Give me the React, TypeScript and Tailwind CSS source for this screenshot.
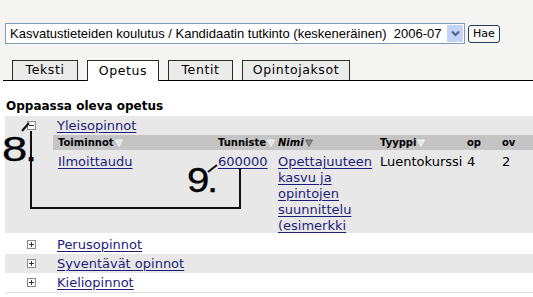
import React from "react";

const Tri = ({ dark = false }: { dark?: boolean }) => (
  <svg width="8" height="8" viewBox="0 0 8 8" className="inline-block ml-[1px] align-[-1px]">
    <polygon
      points="0.5,1 7.5,1 4,7.5"
      fill={dark ? "#8a8a8a" : "#e4e4e4"}
      stroke={dark ? "#6b6b6b" : "#f4f4f4"}
      strokeWidth="1"
    />
  </svg>
);

const Toggle = ({ open = false }: { open?: boolean }) => (
  <div className="w-[9px] h-[9px] border border-[#8c8c8c] bg-white flex items-center justify-center relative">
    <div className="w-[5px] h-[1px] bg-[#333]" />
    {!open && <div className="absolute w-[1px] h-[5px] bg-[#333]" />}
  </div>
);

const tabs = [
  { label: "Teksti", w: "w-[66px]", active: false },
  { label: "Opetus", w: "w-[72px]", active: true },
  { label: "Tentit", w: "w-[65px]", active: false },
  { label: "Opintojaksot", w: "w-[108px]", active: false },
];

const link = "text-[#1c1c7a] underline underline-offset-[2px]";

export default function App() {
  return (
    <div className="w-[533px] h-[297px] bg-white relative overflow-hidden font-['DejaVu_Sans',sans-serif] text-black">
      {/* top search bar + tabs */}
      <div className="bg-[#f4f4f2] pt-[23px]">
        <div className="flex items-center pl-[5px]">
          <div className="w-[460px] h-[21px] border border-[#7f9db9] bg-white flex items-center">
            <span className="flex-1 pl-[4px] font-['Liberation_Sans',sans-serif] text-[13px] whitespace-pre leading-none">
              Kasvatustieteiden koulutus / Kandidaatin tutkinto (keskeneräinen)  2006-07
            </span>
            <div className="w-[16px] h-[17px] mr-[1px] bg-[#c3d3f7] flex items-center justify-center">
              <svg width="9" height="7" viewBox="0 0 9 7">
                <path d="M1 1.5 L4.5 5 L8 1.5" fill="none" stroke="#4d6185" strokeWidth="2" />
              </svg>
            </div>
          </div>
          <div className="ml-[3px] h-[18px] px-[4px] border border-[#2a3a5a] rounded-[3px] bg-[#f7f7f4] flex items-center text-[11px] leading-none">
            Hae
          </div>
        </div>
        <div className="mt-[17px] ml-[3px] h-[20px] border-b border-black flex items-end gap-[9px] pl-[9px]">
          {tabs.map((t) => (
            <div
              key={t.label}
              className={`${t.w} h-[20px] border border-b-0 border-[#2b2b2b] flex items-center justify-center text-[12.5px] tracking-[0.6px] ${
                t.active ? "bg-white h-[21px] -mb-px" : "bg-[#ebebeb]"
              }`}
            >
              {t.label}
            </div>
          ))}
        </div>
      </div>

      {/* heading */}
      <div className="pl-[6px] pt-[17px] h-[35px] text-[12px] font-bold leading-[16px]">Oppaassa oleva opetus</div>

      {/* expanded block */}
      <div className="ml-[5px] bg-[#e8e8e8] h-[117px]">
        <div className="h-[19px] flex items-center">
          <div className="w-[22px]" />
          <Toggle open />
          <a className={`ml-[21px] text-[13px] leading-none ${link}`}>Yleisopinnot</a>
        </div>
        <div className="ml-[48px] h-[15px] bg-[#c4c4c4] grid grid-cols-[5px_160px_60px_102px_87px_35px_1fr] items-center text-[10px] font-bold leading-none">
          <span />
          <span>
            Toiminnot
            <Tri />
          </span>
          <span>
            Tunniste
            <Tri />
          </span>
          <span className="italic">
            Nimi
            <Tri dark />
          </span>
          <span>
            Tyyppi
            <Tri />
          </span>
          <span>op</span>
          <span>ov</span>
        </div>
        <div className="ml-[48px] grid grid-cols-[5px_160px_60px_102px_87px_35px_1fr] pt-[4px] text-[13px] leading-[16px] h-[83px] overflow-hidden">
          <span />
          <a className={link}>Ilmoittaudu</a>
          <a className={link}>600000</a>
          <a className={`${link} pr-[2px]`}>
            Opettajuuteen kasvu ja opintojen suunnittelu (esimerkki
          </a>
          <span>Luentokurssi</span>
          <span>4</span>
          <span>2</span>
        </div>
      </div>

      {/* collapsed blocks */}
      <div className="mt-[2px] ml-[5px]">
        {["Perusopinnot", "Syventävät opinnot", "Kieliopinnot"].map((name, i) => (
          <div key={name} className={`h-[19px] flex items-center ${i === 1 ? "bg-[#e8e8e8]" : "bg-white"}`}>
            <div className="w-[22px]" />
            <Toggle />
            <a className={`ml-[21px] text-[13px] leading-none ${link}`}>{name}</a>
          </div>
        ))}
        <div className="h-[1px] bg-[#e0e0e0]" />
      </div>

      {/* annotations */}
      <svg className="absolute inset-0 pointer-events-none" width="533" height="297">
        <path d="M22 131 L29 123" stroke="#111" strokeWidth="2" />
        <path d="M31 131 L31 208 L240 208 L240 168" fill="none" stroke="#111" strokeWidth="2" />
        <path d="M208 172 L217 165" stroke="#111" strokeWidth="2" />
      </svg>
      <span className="absolute left-[2px] top-[129px] origin-left scale-x-[1.3] font-['Liberation_Sans',sans-serif] text-[35px] leading-[40px] tracking-[-2px] [-webkit-text-stroke:0.3px_black]">
        8.
      </span>
      <span className="absolute left-[187px] top-[160px] origin-left scale-x-[1.15] font-['Liberation_Sans',sans-serif] text-[35px] leading-[40px] tracking-[-2px] [-webkit-text-stroke:0.3px_black]">
        9.
      </span>
    </div>
  );
}
